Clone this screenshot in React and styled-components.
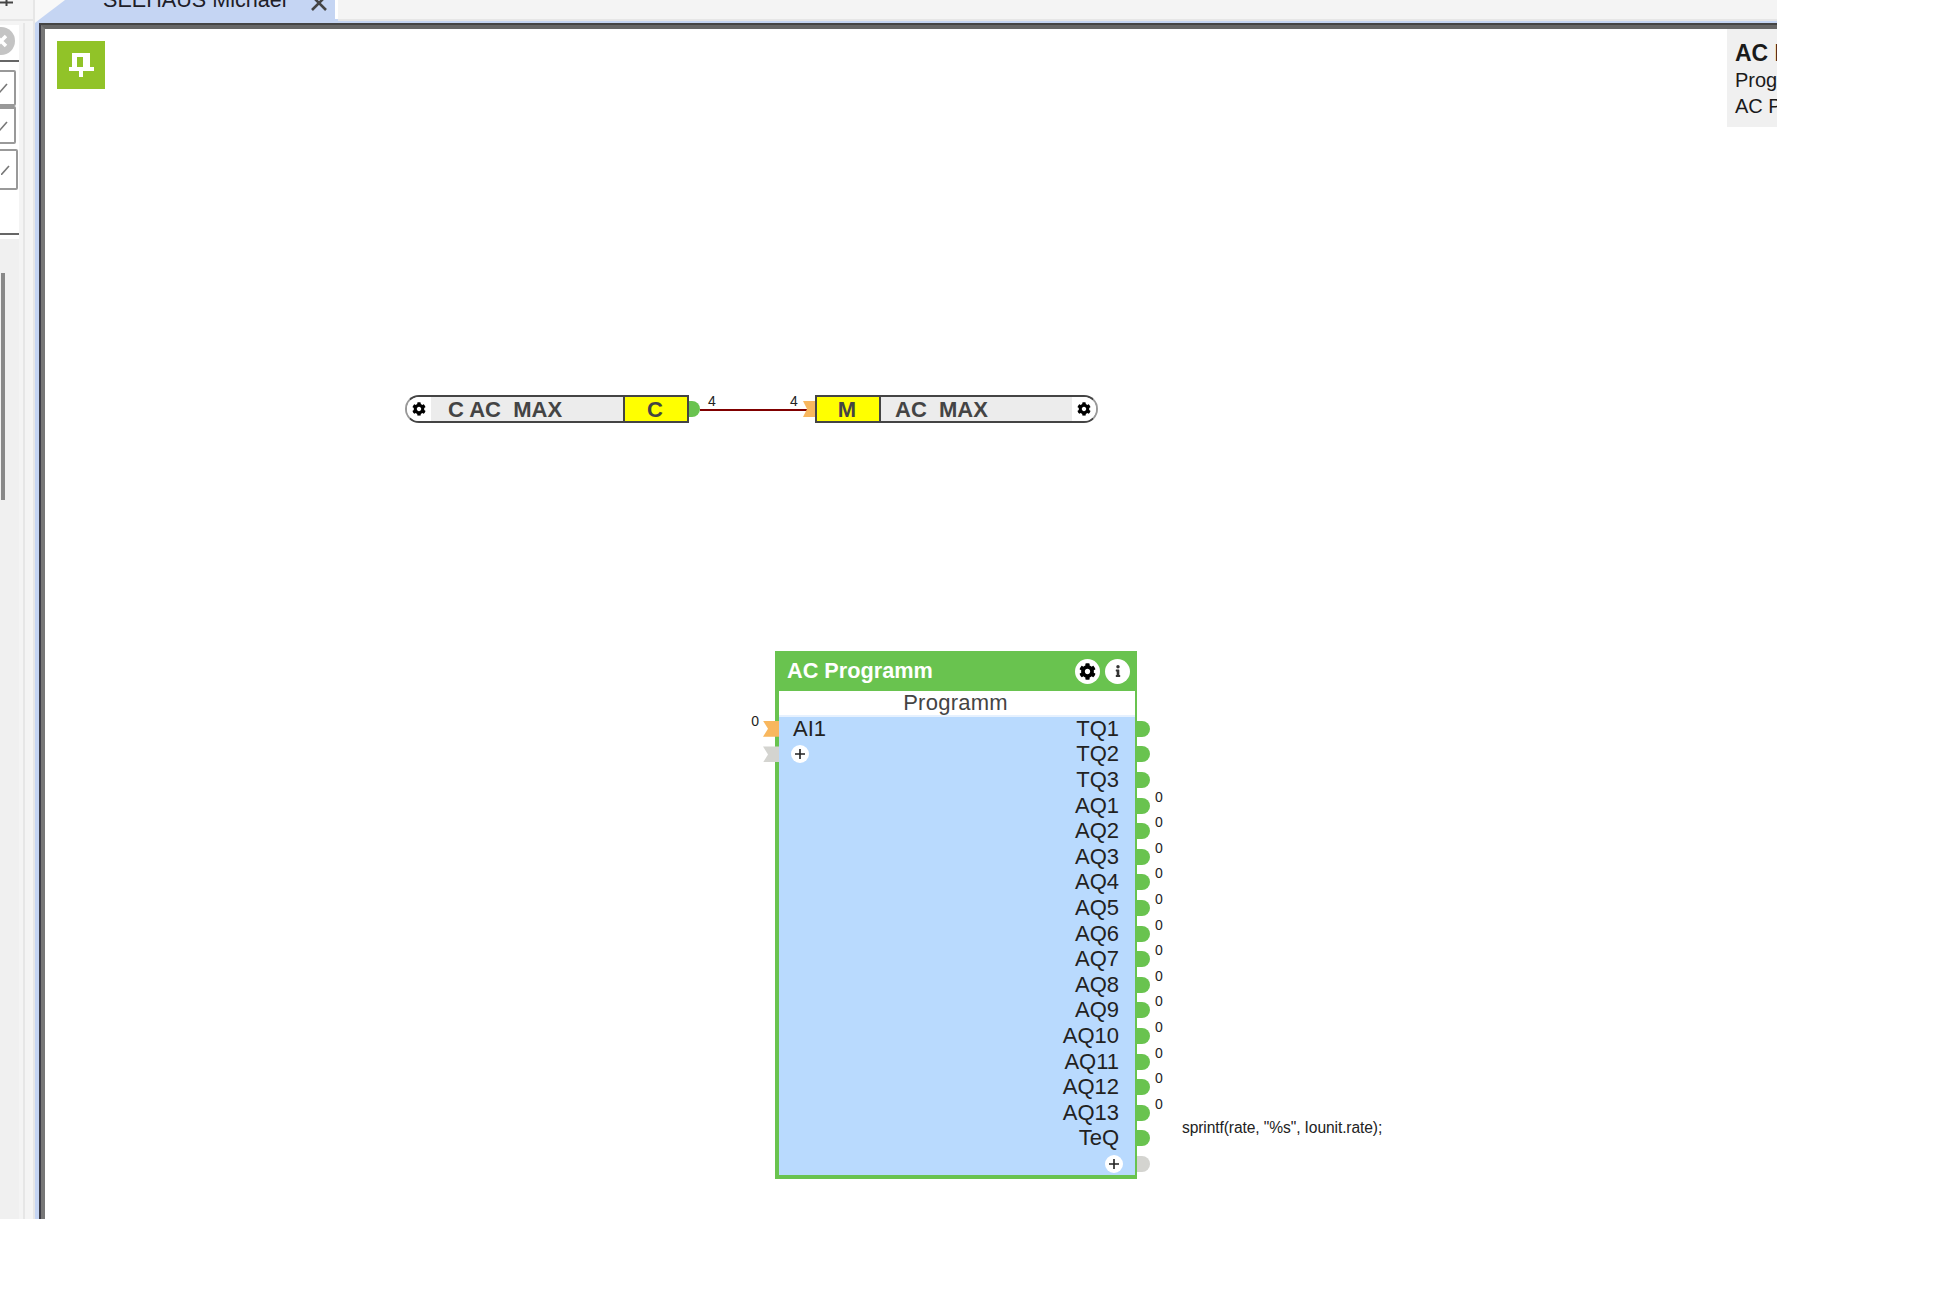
import React from "react";
import styled, { createGlobalStyle } from "styled-components";
import { FaCog, FaInfo } from "react-icons/fa";

const Global = createGlobalStyle`
  html, body { margin: 0; background: #fff; }
  body { font-family: "Liberation Sans", Arial, sans-serif; }
`;

const Shell = styled.div`
  width: 1777px;
  height: 1219px;
  display: flex;
  flex-direction: column;
  overflow: hidden;
  background: #fff;
`;

/* top tab strip */
const TopBar = styled.div`
  height: 23px;
  flex: none;
  display: flex;
  background: #c5d5f3;
`;
const TopCap = styled.div`
  width: 35px;
  height: 23px;
  flex: none;
  box-sizing: border-box;
  background: #f4f4f4;
  border-right: 2px solid #e6e6e6;
  box-shadow: inset 0 -2px #f4f4f4, inset 0 -4px #e6e6e6;
  overflow: hidden;
`;
const TabWrap = styled.div`
  width: 300px;
  flex: none;
  background: #f8f8f8;
`;
const Tab = styled.div`
  height: 23px;
  display: flex;
  align-items: flex-start;
  background: #c5d5f3;
  clip-path: polygon(30px 0, 100% 0, 100% 100%, 0 100%, 5px 19px);
  font-size: 21.6px;
  line-height: 22px;
  color: #1e2028;
  overflow: hidden;
`;
const TabLabel = styled.span`
  margin: -11px 0 0 68px;
  white-space: nowrap;
`;
const TabClose = styled.svg`
  width: 16px;
  height: 16px;
  margin: -5px 0 0 24px;
  flex: none;
`;
const TabGap = styled.div`
  width: 3px;
  height: 19px;
  flex: none;
  background: #fff;
`;
const TabRest = styled.div`
  flex: 1;
  height: 19px;
  background: #f4f4f4;
  border-bottom: 2px solid #e6e6e6;
`;

/* main area */
const Main = styled.div`
  flex: 1;
  display: flex;
  min-height: 0;
`;
const Sidebar = styled.div`
  width: 33px;
  flex: none;
  display: flex;
  background: #f4f4f4;
  border-right: 2px solid #e6e6e6;
`;
const SidePanel = styled.div`
  width: 19px;
  flex: none;
  margin-top: 2px;
  display: flex;
  flex-direction: column;
  background: #fff;
  overflow: hidden;
`;
const SideCloseRow = styled.div`
  height: 35px;
  flex: none;
  border-bottom: 2px solid #666;
  display: flex;
  align-items: center;
`;
const SideClose = styled.svg`
  width: 28px;
  height: 28px;
  margin-left: -13px;
  margin-top: -3px;
  flex: none;
`;
const Check = styled.div`
  flex: none;
  box-sizing: border-box;
  width: ${(p) => p.$w}px;
  height: ${(p) => p.$h}px;
  margin-left: -8px;
  margin-top: ${(p) => p.$top}px;
  border: 2px solid #999;
  border-top-width: ${(p) => p.$thick || 2}px;
  border-radius: 2px;
  display: flex;
  align-items: center;
  justify-content: flex-end;
  padding-right: 6px;
`;
const CheckMark = styled.svg`
  width: 9px;
  height: 10px;
`;
const SideDivider = styled.div`
  flex: none;
  height: 2px;
  margin-top: 43px;
  background: #666;
`;
const SideLower = styled.div`
  flex: 1;
  margin-top: 4px;
  background: #f0f0f0;
  padding: 34px 0 0 1px;
`;
const SideThumb = styled.div`
  width: 4px;
  height: 227px;
  background: #888;
`;
const Gutter = styled.div`
  flex: none;
  width: 10px;
  margin-left: 4px;
  border-left: 2px solid #e6e6e6;
`;

const Workspace = styled.div`
  flex: 1;
  display: flex;
  border-left: 4px solid #c5d5f3;
  min-width: 0;
`;
const Frame = styled.div`
  flex: 1;
  display: flex;
  border-left: 2px solid #3c3c46;
  border-top: 2px solid #444;
  min-width: 0;
`;
const Canvas = styled.div`
  flex: 1;
  position: relative;
  background: #fff;
  border-left: 4px solid #777;
  border-top: 4px solid #666;
  overflow: hidden;
`;

const PinButton = styled.div`
  position: absolute;
  left: 12px;
  top: 12px;
  width: 48px;
  height: 48px;
  background: #91c328;
`;
const PinIcon = styled.svg`
  display: block;
  width: 48px;
  height: 48px;
`;

const InfoBox = styled.div`
  position: absolute;
  top: 0;
  right: 0;
  width: 42px;
  height: 98px;
  padding-left: 8px;
  background: #f0f0f0;
  overflow: hidden;
  white-space: nowrap;
  color: #1a1a1a;
`;
const InfoTitle = styled.div`
  font-size: 23px;
  font-weight: 700;
  line-height: 26px;
  margin-top: 11px;
  margin-bottom: 1px;
`;
const InfoLine = styled.div`
  font-size: 20px;
  line-height: 26px;
`;

/* diagram nodes */
const NodeBar = styled.div`
  position: absolute;
  left: ${(p) => p.$x - 45}px;
  top: ${(p) => p.$y - 29}px;
  width: ${(p) => p.$w}px;
  height: 28px;
  box-sizing: border-box;
  display: flex;
  border: 2px solid #444;
  border-left-color: ${(p) => (p.$side === "left" ? "#999" : "#444")};
  border-right-color: ${(p) => (p.$side === "right" ? "#999" : "#444")};
  border-radius: ${(p) => (p.$side === "left" ? "14px 0 0 14px" : "0 14px 14px 0")};
  font-size: 22px;
  line-height: 26px;
  font-weight: 700;
  color: #444;
`;
const NodeCap = styled.div`
  width: ${(p) => p.$w}px;
  flex: none;
  display: flex;
  align-items: center;
  justify-content: center;
  font-size: 14px;
  color: #000;
  background: #fff;
  border-radius: ${(p) => (p.$side === "left" ? "12px 0 0 12px" : "0 12px 12px 0")};
`;
const NodeName = styled.div`
  flex: 1;
  background: #ececec;
  height: 24px;
  padding-left: ${(p) => p.$pad}px;
  white-space: pre;
`;
const NodeTag = styled.div`
  width: 60px;
  height: 24px;
  flex: none;
  padding-right: 2px;
  text-align: center;
  background: #ff0;
  ${(p) => (p.$divider === "left" ? "border-left: 2px solid #444;" : "border-right: 2px solid #444;")}
`;
const NodeDot = styled.div`
  position: absolute;
  left: 100%;
  top: 4px;
  margin-left: 2px;
  width: 11px;
  height: 16px;
  background: #69c34f;
  border-radius: 0 8px 8px 0;
`;
const NodeFlag = styled.div`
  position: absolute;
  right: 100%;
  top: 4px;
  margin-right: 2px;
  width: 12px;
  height: 16px;
  background: #f8b75e;
  clip-path: polygon(0 0, 100% 0, 100% 100%, 0 100%, 4px 50%);
`;
const Wire = styled.div`
  position: absolute;
  left: ${700 - 45}px;
  top: ${409 - 29}px;
  width: 107px;
  height: 2px;
  background: #800000;
`;
const WireLabel = styled.span`
  position: absolute;
  left: ${(p) => p.$x - 45}px;
  top: ${394 - 29}px;
  font-size: 14px;
  line-height: 14px;
  color: #222;
`;

/* program block */
const Block = styled.div`
  position: absolute;
  left: ${775 - 45}px;
  top: ${651 - 29}px;
  width: 362px;
  height: 528px;
  box-sizing: border-box;
  display: flex;
  flex-direction: column;
  border: solid #69c34f;
  border-width: 0 2px 4px 4px;
  background: #b9dafe;
`;
const BlockHeader = styled.div`
  height: 40px;
  flex: none;
  display: flex;
  align-items: center;
  gap: 5px;
  padding: 0 5px 0 8px;
  box-sizing: border-box;
  background: #69c34f;
  color: #fff;
  font-size: 21.7px;
  font-weight: 700;
`;
const BlockTitle = styled.div`
  flex: 1;
`;
const RoundIcon = styled.div`
  width: 25px;
  height: 25px;
  flex: none;
  border-radius: 50%;
  background: #fff;
  color: ${(p) => p.$color};
  font-size: ${(p) => p.$size}px;
  display: flex;
  align-items: center;
  justify-content: center;
`;
const BlockSub = styled.div`
  height: 24px;
  flex: none;
  padding-right: 3px;
  background: #fff;
  border-bottom: 2px solid #e6f1fe;
  text-align: center;
  font-size: 22px;
  line-height: 24px;
  letter-spacing: 0.25px;
  color: #444;
`;
const Rows = styled.div`
  margin-top: -1px;
  display: flex;
  flex-direction: column;
`;
const Row = styled.div`
  height: 25.6px;
  flex: none;
  position: relative;
  display: flex;
  align-items: center;
  justify-content: space-between;
  padding: 0 16px 0 14px;
  font-size: 22px;
  color: #222;
`;
const RowRight = styled.span`
  margin-left: auto;
`;
const Plus = styled.div`
  width: 18px;
  height: 18px;
  border-radius: 50%;
  background: #fff;
  color: #222;
  display: flex;
  align-items: center;
  justify-content: center;
  margin-left: -2px;
  ${(p) => p.$right && "margin-left: auto; margin-right: -4px;"}
`;
const PlusIcon = styled.svg`
  width: 12px;
  height: 12px;
`;
const OutPort = styled.div`
  position: absolute;
  left: 100%;
  top: 50%;
  margin: -8px 0 0 2px;
  width: 13px;
  height: 16px;
  background: ${(p) => p.$color};
  border-radius: 0 8px 8px 0;
`;
const InPort = styled.div`
  position: absolute;
  right: 100%;
  top: 50%;
  margin-top: -8px;
  width: 16px;
  height: 16px;
  background: ${(p) => p.$color};
  clip-path: polygon(0 0, 100% 0, 100% 100%, 0 100%, 5px 50%);
`;
const PortValue = styled.span`
  position: absolute;
  left: 100%;
  top: 50%;
  margin: -16px 0 0 20px;
  font-size: 14px;
  line-height: 14px;
  color: #222;
`;
const InValue = styled.span`
  position: absolute;
  right: 100%;
  top: 50%;
  margin: -15px 20px 0 0;
  font-size: 14px;
  line-height: 14px;
  color: #222;
`;
const Code = styled.span`
  position: absolute;
  left: 100%;
  top: 50%;
  margin: -20px 0 0 47px;
  font-size: 15.6px;
  line-height: 20px;
  letter-spacing: -0.1px;
  white-space: nowrap;
  color: #222;
`;

const GREEN = "#69c34f";
const GREY = "#d4d4d0";
const ORANGE = "#f8b75e";

const PlusGlyph = () => (
  <PlusIcon viewBox="0 0 12 12">
    <path d="M6 1v10M1 6h10" stroke="currentColor" strokeWidth="1.6" fill="none" />
  </PlusIcon>
);

const outputs = [
  ["TQ1", false],
  ["TQ2", false],
  ["TQ3", false],
  ...Array.from({ length: 13 }, (_, i) => [`AQ${i + 1}`, true]),
];

export default function App() {
  return (
    <>
      <Global />
      <Shell>
        <TopBar>
          <TopCap>
            <svg width="14" height="6" viewBox="0 0 14 6" style={{ display: "block" }}>
              <path d="M0 2.5h13M6.5 0v6" stroke="#444" strokeWidth="2" fill="none" />
            </svg>
          </TopCap>
          <TabWrap>
            <Tab>
              <TabLabel>SEEHAUS Michael</TabLabel>
              <TabClose viewBox="0 0 16 16">
                <path d="M1 1l14 14M15 1L1 15" stroke="#444" strokeWidth="2.6" fill="none" />
              </TabClose>
            </Tab>
          </TabWrap>
          <TabGap />
          <TabRest />
        </TopBar>
        <Main>
          <Sidebar>
            <SidePanel>
              <SideCloseRow>
                <SideClose viewBox="0 0 28 28">
                  <circle cx="14" cy="14" r="14" fill="#c4c4c4" />
                  <path d="M9 9l10 10M19 9L9 19" stroke="#fff" strokeWidth="3.5" fill="none" />
                </SideClose>
              </SideCloseRow>
              <Check $w={24} $h={36} $top={8}>
                <CheckMark viewBox="0 0 9 10"><path d="M0 10L8 1" stroke="#777" strokeWidth="1.6" fill="none" /></CheckMark>
              </Check>
              <Check $w={24} $h={38} $top={0} $thick={3}>
                <CheckMark viewBox="0 0 9 10"><path d="M0 10L8 1" stroke="#777" strokeWidth="1.6" fill="none" /></CheckMark>
              </Check>
              <Check $w={26} $h={41} $top={5}>
                <CheckMark viewBox="0 0 9 10"><path d="M0 10L8 1" stroke="#777" strokeWidth="1.6" fill="none" /></CheckMark>
              </Check>
              <SideDivider />
              <SideLower>
                <SideThumb />
              </SideLower>
            </SidePanel>
            <Gutter />
          </Sidebar>
          <Workspace>
            <Frame>
              <Canvas>
                <PinButton>
                  <PinIcon viewBox="0 0 48 48">
                    <path
                      fill="#fff"
                      fillRule="evenodd"
                      d="M15 12h18v14h4v4H26v6h-4v-6H12v-4h3zM20 16v10h6V16z"
                    />
                  </PinIcon>
                </PinButton>

                <InfoBox>
                  <InfoTitle>AC Programm</InfoTitle>
                  <InfoLine>Programm</InfoLine>
                  <InfoLine>AC Programm</InfoLine>
                </InfoBox>

                <NodeBar $x={405} $y={395} $w={284} $side="left">
                  <NodeCap $w={24} $side="left"><FaCog /></NodeCap>
                  <NodeName $pad={17}>{"C AC  MAX"}</NodeName>
                  <NodeTag $divider="left">C</NodeTag>
                  <NodeDot />
                </NodeBar>

                <Wire />
                <WireLabel $x={708}>4</WireLabel>
                <WireLabel $x={790}>4</WireLabel>

                <NodeBar $x={815} $y={395} $w={283} $side="right">
                  <NodeFlag />
                  <NodeTag $divider="right">M</NodeTag>
                  <NodeName $pad={14}>{"AC  MAX"}</NodeName>
                  <NodeCap $w={24} $side="right"><FaCog /></NodeCap>
                </NodeBar>

                <Block>
                  <BlockHeader>
                    <BlockTitle>AC Programm</BlockTitle>
                    <RoundIcon $color="#000" $size={17}><FaCog /></RoundIcon>
                    <RoundIcon $color="#333" $size={12}><FaInfo /></RoundIcon>
                  </BlockHeader>
                  <BlockSub>Programm</BlockSub>
                  <Rows>
                    {outputs.map(([name, hasValue], i) => (
                      <Row key={name}>
                        {i === 0 && (
                          <>
                            <InPort $color={ORANGE} />
                            <InValue>0</InValue>
                            <span>AI1</span>
                          </>
                        )}
                        {i === 1 && (
                          <>
                            <InPort $color={GREY} />
                            <Plus><PlusGlyph /></Plus>
                          </>
                        )}
                        <RowRight>{name}</RowRight>
                        <OutPort $color={GREEN} />
                        {hasValue && <PortValue>0</PortValue>}
                      </Row>
                    ))}
                    <Row>
                      <RowRight>TeQ</RowRight>
                      <OutPort $color={GREEN} />
                      <Code>{'sprintf(rate, "%s", Iounit.rate);'}</Code>
                    </Row>
                    <Row>
                      <Plus $right><PlusGlyph /></Plus>
                      <OutPort $color={GREY} />
                    </Row>
                  </Rows>
                </Block>
              </Canvas>
            </Frame>
          </Workspace>
        </Main>
      </Shell>
    </>
  );
}
